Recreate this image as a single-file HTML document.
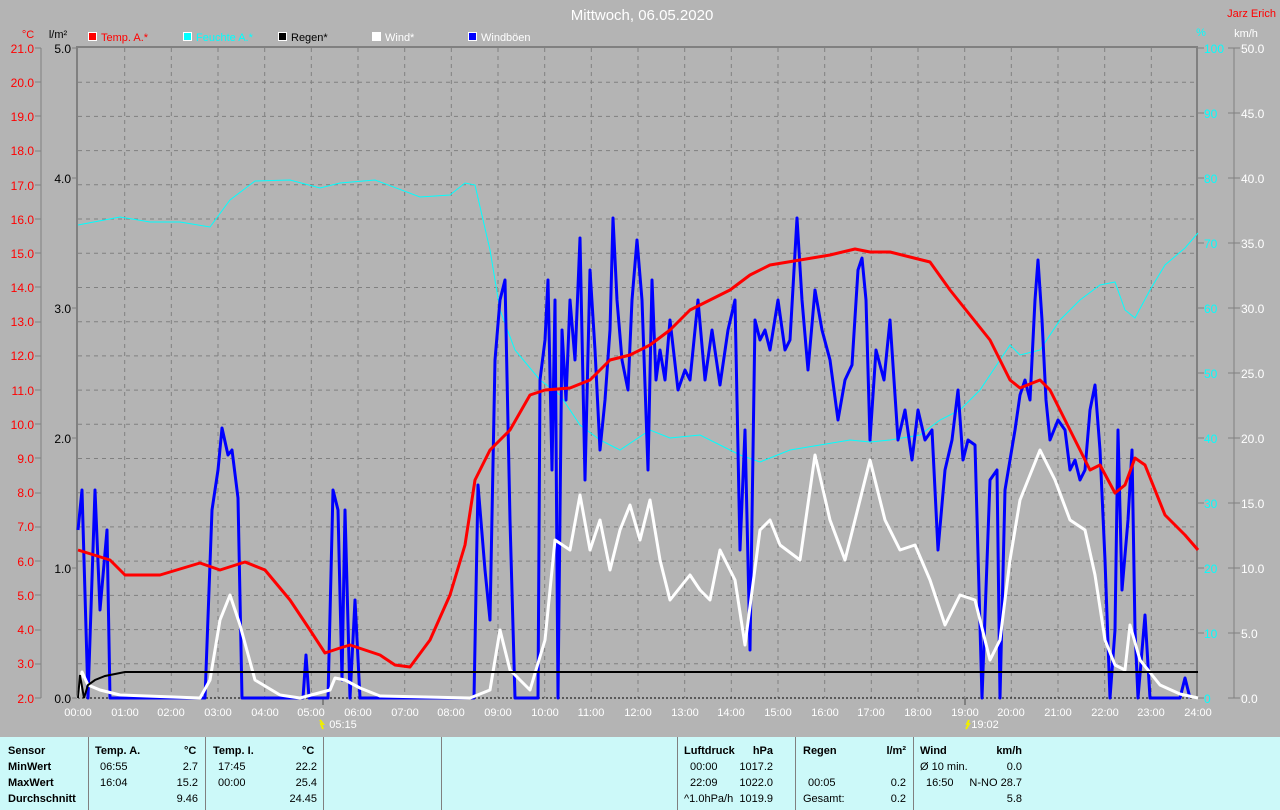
<!DOCTYPE html>
<html><head><meta charset="utf-8"><style>
body{margin:0;width:1280px;height:810px;overflow:hidden;background:#b4b4b4;font-family:"Liberation Sans",sans-serif;}
svg{position:absolute;left:0;top:0}
.tb{position:absolute;left:0;top:737px;width:1280px;height:73px;background:#ccf9f9;}
.c{position:absolute;font-size:11px;color:#000;white-space:nowrap}
.b{font-weight:bold}
.sep{position:absolute;top:0;width:1px;height:73px;background:#808080}
</style></head><body>
<svg width="1280" height="737" font-family="Liberation Sans, sans-serif" font-size="12">
<text x="642" y="20" fill="#fff" font-size="15" text-anchor="middle">Mittwoch, 06.05.2020</text>
<text x="1276" y="17" fill="#f00" font-size="11" text-anchor="end">Jarz Erich</text>
<text x="28" y="38" fill="#f00" font-size="11" text-anchor="middle">°C</text>
<text x="58" y="38" fill="#000" font-size="11" text-anchor="middle">l/m²</text>
<text x="1201" y="36" fill="#0ff" font-size="11" text-anchor="middle">%</text>
<text x="1246" y="37" fill="#fff" font-size="11" text-anchor="middle">km/h</text>
<g font-size="11">
<rect x="88.5" y="32.5" width="8" height="8" fill="#f00" stroke="#fff"/><text x="101" y="41" fill="#f00">Temp. A.*</text>
<rect x="183.5" y="32.5" width="8" height="8" fill="#0ff" stroke="#fff"/><text x="196" y="41" fill="#0ff">Feuchte A.*</text>
<rect x="278.5" y="32.5" width="8" height="8" fill="#000" stroke="#fff"/><text x="291" y="41" fill="#000">Regen*</text>
<rect x="372.5" y="32.5" width="8" height="8" fill="#fff" stroke="#fff"/><text x="385" y="41" fill="#fff">Wind*</text>
<rect x="468.5" y="32.5" width="8" height="8" fill="#00f" stroke="#fff"/><text x="481" y="41" fill="#fff">Windböen</text>
</g>
<g stroke="#808080" stroke-dasharray="4,4" stroke-width="1">
<path d="M78 82.2H1197M78 116.4H1197M78 150.6H1197M78 184.8H1197M78 219H1197M78 253.3H1197M78 287.5H1197M78 321.7H1197M78 355.9H1197M78 390.1H1197M78 424.3H1197M78 458.5H1197M78 492.7H1197M78 526.9H1197M78 561.1H1197M78 595.4H1197M78 629.6H1197M78 663.8H1197"/>
<path d="M124.7 48V698M171.3 48V698M218 48V698M264.7 48V698M311.3 48V698M358 48V698M404.7 48V698M451.3 48V698M498 48V698M544.7 48V698M591.3 48V698M638 48V698M684.7 48V698M731.3 48V698M778 48V698M824.7 48V698M871.3 48V698M918 48V698M964.7 48V698M1011.3 48V698M1058 48V698M1104.7 48V698M1151.3 48V698"/>
</g>
<path d="M77 698V47H1197V698" fill="none" stroke="#808080" stroke-width="2"/>
<path d="M78 698H1197" stroke="#000" stroke-dasharray="2,2"/>
<path d="M323 698V705M965 698V705" stroke="#808080" stroke-width="2"/>
<!-- left axis -->
<path d="M41 48V698" stroke="#808080"/>
<g fill="#f00" font-size="12" text-anchor="end">
<text x="34" y="53">21.0</text><text x="34" y="87">20.0</text><text x="34" y="121">19.0</text><text x="34" y="155">18.0</text><text x="34" y="190">17.0</text><text x="34" y="224">16.0</text><text x="34" y="258">15.0</text><text x="34" y="292">14.0</text><text x="34" y="326">13.0</text><text x="34" y="360">12.0</text><text x="34" y="395">11.0</text><text x="34" y="429">10.0</text><text x="34" y="463">9.0</text><text x="34" y="497">8.0</text><text x="34" y="531">7.0</text><text x="34" y="566">6.0</text><text x="34" y="600">5.0</text><text x="34" y="634">4.0</text><text x="34" y="668">3.0</text><text x="34" y="703">2.0</text>
</g>
<g stroke="#808080"><path d="M35 48H41M35 82H41M35 116H41M35 151H41M35 185H41M35 219H41M35 253H41M35 287H41M35 322H41M35 356H41M35 390H41M35 424H41M35 458H41M35 493H41M35 527H41M35 561H41M35 595H41M35 630H41M35 664H41M35 698H41M72 48H77M72 178H77M72 308H77M72 438H77M72 568H77M72 698H77"/></g>
<g fill="#000" text-anchor="end" font-size="12">
<text x="71" y="53">5.0</text><text x="71" y="183">4.0</text><text x="71" y="313">3.0</text><text x="71" y="443">2.0</text><text x="71" y="573">1.0</text><text x="71" y="703">0.0</text>
</g>
<!-- right axes -->
<path d="M1234 48V698" stroke="#808080"/>
<g stroke="#808080"><path d="M1198 48H1204M1198 113H1204M1198 178H1204M1198 243H1204M1198 308H1204M1198 373H1204M1198 438H1204M1198 503H1204M1198 568H1204M1198 633H1204M1198 698H1204M1228 48H1240M1228 113H1240M1228 178H1240M1228 243H1240M1228 308H1240M1228 373H1240M1228 438H1240M1228 503H1240M1228 568H1240M1228 633H1240M1228 698H1240"/></g>
<g fill="#0ff" font-size="12">
<text x="1204" y="53">100</text><text x="1204" y="118">90</text><text x="1204" y="183">80</text><text x="1204" y="248">70</text><text x="1204" y="313">60</text><text x="1204" y="378">50</text><text x="1204" y="443">40</text><text x="1204" y="508">30</text><text x="1204" y="573">20</text><text x="1204" y="638">10</text><text x="1204" y="703">0</text>
</g>
<g fill="#fff" font-size="12">
<text x="1241" y="53">50.0</text><text x="1241" y="118">45.0</text><text x="1241" y="183">40.0</text><text x="1241" y="248">35.0</text><text x="1241" y="313">30.0</text><text x="1241" y="378">25.0</text><text x="1241" y="443">20.0</text><text x="1241" y="508">15.0</text><text x="1241" y="573">10.0</text><text x="1241" y="638">5.0</text><text x="1241" y="703">0.0</text>
</g>
<g fill="#fff" font-size="11" text-anchor="middle">
<text x="78" y="716">00:00</text><text x="125" y="716">01:00</text><text x="171" y="716">02:00</text><text x="218" y="716">03:00</text><text x="265" y="716">04:00</text><text x="311" y="716">05:00</text><text x="358" y="716">06:00</text><text x="405" y="716">07:00</text><text x="451" y="716">08:00</text><text x="498" y="716">09:00</text><text x="545" y="716">10:00</text><text x="591" y="716">11:00</text><text x="638" y="716">12:00</text><text x="685" y="716">13:00</text><text x="731" y="716">14:00</text><text x="778" y="716">15:00</text><text x="825" y="716">16:00</text><text x="871" y="716">17:00</text><text x="918" y="716">18:00</text><text x="965" y="716">19:00</text><text x="1011" y="716">20:00</text><text x="1058" y="716">21:00</text><text x="1105" y="716">22:00</text><text x="1151" y="716">23:00</text><text x="1198" y="716">24:00</text>
<text x="343" y="728">05:15</text><text x="985" y="728">19:02</text>
</g>
<path d="M320 720l3 4h-2l2 5" stroke="#ee0" stroke-width="2" fill="none"/>
<path d="M966 729l3-5h-2l2-4" stroke="#ee0" stroke-width="2" fill="none"/>
<!-- cyan humidity -->
<polyline fill="none" stroke="#0ff" stroke-width="1" points="78,225 120,217 150,222 180,222 210,227 230,200 255,181 290,180 320,188 340,183 375,180 420,197 450,195 465,183 475,185 490,250 500,310 515,350 540,380 560,395 580,425 600,440 620,450 650,430 670,438 700,435 720,445 740,455 760,462 790,450 820,445 850,440 870,442 890,440 920,435 940,420 960,410 980,390 1000,360 1010,345 1020,355 1040,350 1060,320 1080,300 1100,285 1115,282 1125,310 1135,318 1150,290 1165,265 1185,248 1198,233"/>
<!-- blue gusts -->
<polyline fill="none" stroke="#00f" stroke-width="3" stroke-linejoin="round" points="78,530 82,490 88,698 95,490 100,610 107,530 110,698 205,698 212,510 218,470 222,428 228,455 232,450 238,498 242,698 303,698 306,655 309,698 328,698 333,490 338,510 342,680 345,510 350,698 355,600 360,698 474,698 478,485 485,570 490,620 495,360 500,300 505,280 510,520 515,698 538,698 540,380 545,340 548,280 552,470 555,300 558,698 562,330 566,400 570,300 575,360 580,238 585,480 590,270 595,350 600,450 605,400 610,330 613,218 617,300 622,360 628,390 632,300 637,240 642,300 648,470 652,280 656,380 660,350 665,380 670,320 678,390 685,370 690,380 698,300 705,380 712,330 720,385 728,330 735,300 740,550 745,430 750,650 755,320 760,340 765,330 770,350 778,300 785,350 790,340 797,218 802,300 808,370 815,290 822,330 830,360 838,420 845,380 852,365 858,270 862,258 866,300 870,440 876,350 884,380 890,320 898,440 905,410 912,460 918,410 925,440 932,430 938,550 945,470 952,440 958,390 963,460 968,440 975,445 982,698 990,480 997,470 1000,698 1005,490 1010,460 1015,430 1020,395 1025,380 1030,400 1035,300 1038,260 1042,320 1046,400 1050,440 1058,420 1065,430 1070,470 1075,460 1080,480 1085,470 1090,410 1095,385 1100,450 1105,560 1110,698 1115,630 1118,430 1122,590 1128,520 1132,450 1135,630 1138,698 1145,615 1150,698 1180,698 1185,678 1190,698"/>
<!-- white wind -->
<polyline fill="none" stroke="#fff" stroke-width="3" stroke-linejoin="round" points="78,698 82,672 88,685 100,690 120,695 200,698 210,680 220,620 230,595 240,625 255,680 280,695 300,698 330,690 335,678 345,680 360,688 380,696 470,698 490,690 500,630 510,670 530,690 545,640 555,540 570,550 580,495 590,550 600,520 610,570 620,530 630,505 640,540 650,500 660,560 670,600 690,575 700,590 710,600 720,550 735,580 745,645 760,530 770,520 780,545 800,560 815,455 830,520 845,560 860,500 870,460 885,520 900,550 915,545 930,580 945,625 960,595 975,600 990,660 1000,640 1010,560 1020,500 1040,450 1055,480 1070,520 1085,530 1095,575 1105,640 1115,665 1125,670 1130,625 1140,660 1160,685 1180,694 1198,698"/>
<!-- red temp -->
<polyline fill="none" stroke="#f00" stroke-width="3" stroke-linejoin="round" points="78,550 110,560 125,575 160,575 200,563 220,570 245,562 265,570 290,600 310,630 325,653 340,648 350,645 380,655 395,665 410,667 430,640 450,595 465,545 475,480 490,450 510,430 530,395 545,390 570,388 590,380 610,360 630,355 650,345 670,330 690,310 710,300 730,290 750,275 770,265 800,260 830,255 855,249 870,252 890,252 910,257 930,262 950,290 970,315 990,340 1010,380 1020,388 1040,380 1050,390 1070,430 1090,470 1100,465 1115,493 1125,485 1135,458 1145,465 1165,515 1185,535 1198,550"/>
<!-- black rain -->
<polyline fill="none" stroke="#000" stroke-width="2" points="78,698 80,675 84,698 88,685 95,680 105,676 125,672 1198,672"/>
</svg>
<div class="tb">
<div class="sep" style="left:88px"></div><div class="sep" style="left:205px"></div><div class="sep" style="left:323px"></div><div class="sep" style="left:441px"></div><div class="sep" style="left:677px"></div><div class="sep" style="left:795px"></div><div class="sep" style="left:913px"></div>
<div class="c b" style="left:8px;top:8px">Sensor</div>
<div class="c b" style="left:8px;top:24px">MinWert</div>
<div class="c b" style="left:8px;top:40px">MaxWert</div>
<div class="c b" style="left:8px;top:56px">Durchschnitt</div>
<div class="c b" style="left:95px;top:8px">Temp. A.</div><div class="c b" style="left:184px;top:8px">°C</div>
<div class="c" style="left:100px;top:24px">06:55</div><div class="c" style="right:1082px;top:24px">2.7</div>
<div class="c" style="left:100px;top:40px">16:04</div><div class="c" style="right:1082px;top:40px">15.2</div>
<div class="c" style="right:1082px;top:56px">9.46</div>
<div class="c b" style="left:213px;top:8px">Temp. I.</div><div class="c b" style="left:302px;top:8px">°C</div>
<div class="c" style="left:218px;top:24px">17:45</div><div class="c" style="right:963px;top:24px">22.2</div>
<div class="c" style="left:218px;top:40px">00:00</div><div class="c" style="right:963px;top:40px">25.4</div>
<div class="c" style="right:963px;top:56px">24.45</div>
<div class="c b" style="left:684px;top:8px">Luftdruck</div><div class="c b" style="right:507px;top:8px">hPa</div>
<div class="c" style="left:690px;top:24px">00:00</div><div class="c" style="right:507px;top:24px">1017.2</div>
<div class="c" style="left:690px;top:40px">22:09</div><div class="c" style="right:507px;top:40px">1022.0</div>
<div class="c" style="left:684px;top:56px">^1.0hPa/h</div><div class="c" style="right:507px;top:56px">1019.9</div>
<div class="c b" style="left:803px;top:8px">Regen</div><div class="c b" style="right:374px;top:8px">l/m²</div>
<div class="c" style="left:808px;top:40px">00:05</div><div class="c" style="right:374px;top:40px">0.2</div>
<div class="c" style="left:803px;top:56px">Gesamt:</div><div class="c" style="right:374px;top:56px">0.2</div>
<div class="c b" style="left:920px;top:8px">Wind</div><div class="c b" style="right:258px;top:8px">km/h</div>
<div class="c" style="left:920px;top:24px">Ø 10 min.</div><div class="c" style="right:258px;top:24px">0.0</div>
<div class="c" style="left:926px;top:40px">16:50</div><div class="c" style="right:258px;top:40px">N-NO 28.7</div>
<div class="c" style="right:258px;top:56px">5.8</div>
</div>
</body></html>
